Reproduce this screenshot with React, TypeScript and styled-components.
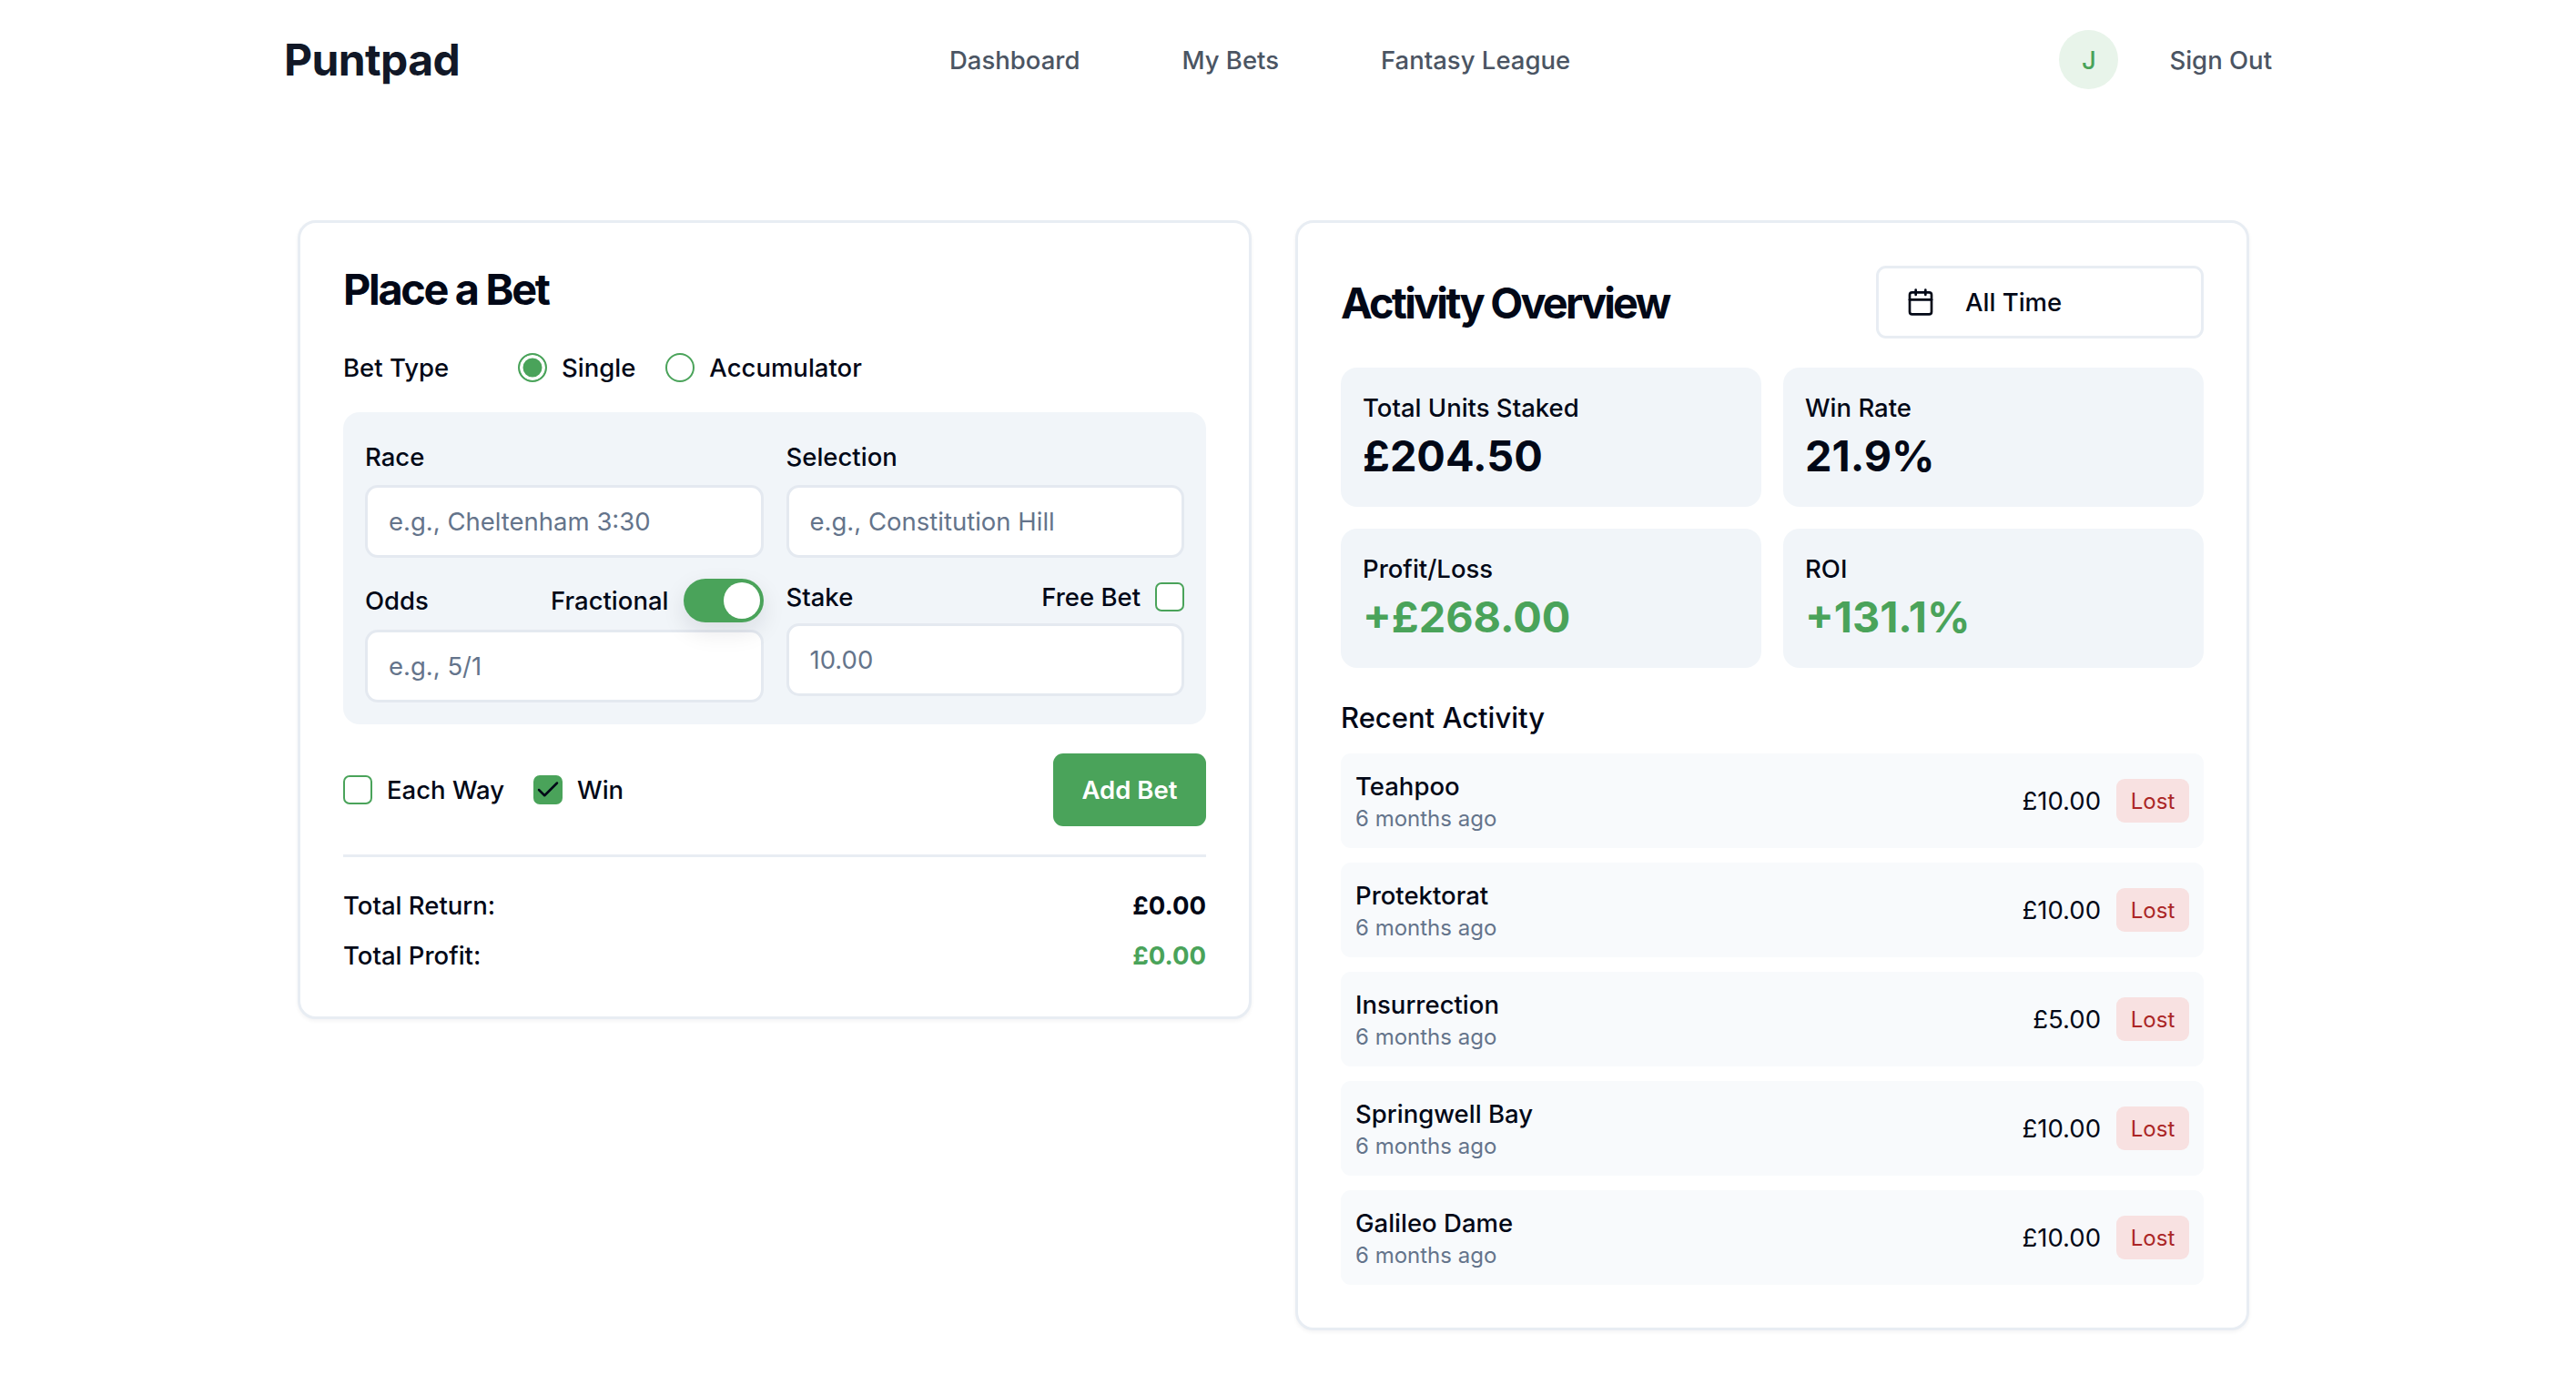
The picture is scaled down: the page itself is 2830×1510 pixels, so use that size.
import React from 'react';
import styled, { createGlobalStyle } from 'styled-components';
import { Calendar, Check } from 'lucide-react';

const GREEN = '#4aa35a';
const INK = '#020817';

const GlobalStyle = createGlobalStyle`
  * { box-sizing: border-box; }
  html, body { margin: 0; padding: 0; background: #fff; }
  body {
    font-family: Inter, "Liberation Sans", sans-serif;
    color: ${INK};
    font-size: 27.5px;
  }
`;

const Page = styled.div`
  width: 2830px;
  height: 1510px;
  overflow: hidden;
`;

const Header = styled.header`
  display: grid;
  grid-template-columns: 731px 1fr auto;
  align-items: center;
  height: 131px;
  padding: 0 334px 0 312px;
`;

const Logo = styled.div`
  font-size: 48px;
  font-weight: 700;
  letter-spacing: -0.6px;
  color: #111827;
`;

const Nav = styled.nav`
  display: flex;
  gap: 112px;
`;

const NavLink = styled.a`
  font-weight: 500;
  color: #4b5563;
`;

const UserArea = styled.div`
  display: flex;
  align-items: center;
  gap: 56px;
`;

const Avatar = styled.div`
  width: 65px;
  height: 65px;
  border-radius: 50%;
  background: #e8f4ea;
  color: ${GREEN};
  display: flex;
  align-items: center;
  justify-content: center;
  font-weight: 500;
`;

const Main = styled.main`
  display: grid;
  grid-template-columns: 1048px 1048px;
  gap: 48px;
  align-items: start;
  padding: 111px 0 0 327px;
`;

const Card = styled.section`
  background: #fff;
  border: 3px solid #e8edf3;
  border-radius: 20px;
  padding: 47px;
  box-shadow: 0 2px 4px rgba(15, 23, 42, 0.05);
`;

const Title = styled.h2<{ $tight?: boolean }>`
  margin: 0;
  font-size: 46.8px;
  line-height: 52px;
  font-weight: 700;
  letter-spacing: ${(p) => (p.$tight ? '-2.8px' : '-2.3px')};
  color: ${INK};
`;

const BetTypeRow = styled.div`
  display: flex;
  align-items: center;
  margin-top: 31px;
  height: 58px;
  font-weight: 500;
`;

const BetTypeLabel = styled.span`
  width: 192px;
`;

const RadioOption = styled.label`
  display: flex;
  align-items: center;
  gap: 16px;
  margin-right: 33px;
`;

const Radio = styled.span<{ $on?: boolean }>`
  width: 32px;
  height: 32px;
  border-radius: 50%;
  border: 2.5px solid ${GREEN};
  background: ${(p) => (p.$on ? GREEN : '#fff')};
  box-shadow: ${(p) => (p.$on ? 'inset 0 0 0 3.5px #fff' : 'none')};
`;

const Panel = styled.div`
  display: grid;
  grid-template-columns: 437.5px 437.5px;
  column-gap: 25px;
  background: #f1f5f9;
  border-radius: 18px;
  padding: 24px;
  margin-top: 20px;
  height: 343px;
`;

const Field = styled.div`
  display: flex;
  flex-direction: column;
`;

const FieldHead = styled.div<{ $h: number; $pad: string }>`
  display: flex;
  align-items: center;
  justify-content: space-between;
  height: ${(p) => p.$h}px;
  padding: ${(p) => p.$pad};
  font-weight: 500;
`;

const HeadRight = styled.div`
  display: flex;
  align-items: center;
  gap: 16px;
`;

const Input = styled.input`
  width: 100%;
  height: 80px;
  border: 3px solid #e4e9f0;
  border-radius: 14px;
  background: #fff;
  padding: 0 23px;
  font-family: inherit;
  font-size: 27.5px;
  color: ${INK};
  outline: none;
  &::placeholder { color: #64748b; opacity: 1; }
`;

const Toggle = styled.span`
  position: relative;
  width: 88px;
  height: 48px;
  border-radius: 24px;
  background: ${GREEN};
  box-shadow: 0 10px 26px rgba(15, 23, 42, 0.1);
`;

const Thumb = styled.span`
  position: absolute;
  top: 4px;
  right: 4px;
  width: 40px;
  height: 40px;
  border-radius: 50%;
  background: #fff;
`;

const Box = styled.span<{ $on?: boolean }>`
  width: 32px;
  height: 32px;
  flex: none;
  border-radius: 7px;
  border: 2.5px solid ${GREEN};
  background: ${(p) => (p.$on ? GREEN : '#fff')};
  display: flex;
  align-items: center;
  justify-content: center;
  color: ${INK};
  svg { flex: none; }
`;

const ActionRow = styled.div`
  display: flex;
  align-items: center;
  margin-top: 32px;
`;

const CheckOption = styled.label`
  display: flex;
  align-items: center;
  gap: 16px;
  margin-right: 32px;
  font-weight: 500;
`;

const AddButton = styled.button`
  margin-left: auto;
  width: 168px;
  height: 80px;
  border: 0;
  border-radius: 11px;
  background: ${GREEN};
  color: #fff;
  font-family: inherit;
  font-size: 27.5px;
  font-weight: 600;
`;

const Totals = styled.div`
  margin-top: 31px;
  padding-top: 33px;
  border-top: 3px solid #e8edf3;
  display: flex;
  flex-direction: column;
  gap: 15px;
`;

const TotalRow = styled.div`
  display: flex;
  justify-content: space-between;
  align-items: center;
  height: 40px;
  font-weight: 500;
`;

const TotalValue = styled.span<{ $green?: boolean }>`
  font-weight: 700;
  color: ${(p) => (p.$green ? GREEN : INK)};
`;

const OverviewHead = styled.div`
  display: flex;
  align-items: center;
  justify-content: space-between;
  height: 80px;
  margin-bottom: 32px;
  h2 { padding-top: 2px; }
`;

const RangeSelect = styled.div`
  width: 360px;
  height: 80px;
  border: 3px solid #e8edf3;
  border-radius: 11px;
  display: flex;
  align-items: center;
  gap: 33px;
  padding: 0 30px;
  font-weight: 500;
`;

const StatGrid = styled.div`
  display: grid;
  grid-template-columns: 1fr 1fr;
  gap: 24px;
`;

const Stat = styled.div`
  background: #f1f5f9;
  border-radius: 18px;
  height: 153px;
  padding: 24px;
`;

const StatLabel = styled.div`
  font-weight: 500;
  line-height: 40px;
`;

const StatValue = styled.div<{ $green?: boolean }>`
  margin-top: 4px;
  font-size: 46.8px;
  line-height: 58px;
  font-weight: 700;
  color: ${(p) => (p.$green ? GREEN : INK)};
`;

const RecentTitle = styled.h3`
  margin: 33px 0 17px;
  font-size: 31px;
  line-height: 44px;
  font-weight: 500;
  color: ${INK};
`;

const ActivityList = styled.div`
  display: flex;
  flex-direction: column;
  gap: 16px;
`;

const ActivityRow = styled.div`
  display: flex;
  align-items: center;
  justify-content: space-between;
  height: 104px;
  padding: 0 16px;
  background: #f8fafc;
  border-radius: 11px;
`;

const RowName = styled.div`
  font-weight: 500;
  line-height: 40px;
`;

const RowTime = styled.div`
  font-size: 24px;
  line-height: 32px;
  color: #64748b;
`;

const RowRight = styled.div`
  display: flex;
  align-items: center;
  gap: 17px;
`;

const Amount = styled.span`
  font-weight: 400;
`;

const LostBadge = styled.span`
  height: 48px;
  width: 80px;
  display: flex;
  align-items: center;
  justify-content: center;
  border-radius: 9px;
  background: #f8e1e1;
  color: #ab2626;
  font-size: 24px;
  font-weight: 400;
`;

const activity = [
  { name: 'Teahpoo', stake: '£10.00' },
  { name: 'Protektorat', stake: '£10.00' },
  { name: 'Insurrection', stake: '£5.00' },
  { name: 'Springwell Bay', stake: '£10.00' },
  { name: 'Galileo Dame', stake: '£10.00' },
];

const stats = [
  { label: 'Total Units Staked', value: '£204.50' },
  { label: 'Win Rate', value: '21.9%' },
  { label: 'Profit/Loss', value: '+£268.00', green: true },
  { label: 'ROI', value: '+131.1%', green: true },
];

const App = () => (
  <Page>
    <GlobalStyle />
    <Header>
      <Logo>Puntpad</Logo>
      <Nav>
        <NavLink>Dashboard</NavLink>
        <NavLink>My Bets</NavLink>
        <NavLink>Fantasy League</NavLink>
      </Nav>
      <UserArea>
        <Avatar>J</Avatar>
        <NavLink>Sign Out</NavLink>
      </UserArea>
    </Header>
    <Main>
      <Card>
        <Title>Place a Bet</Title>
        <BetTypeRow>
          <BetTypeLabel>Bet Type</BetTypeLabel>
          <RadioOption>
            <Radio $on />
            Single
          </RadioOption>
          <RadioOption>
            <Radio />
            Accumulator
          </RadioOption>
        </BetTypeRow>
        <Panel>
          <Field>
            <FieldHead $h={56} $pad="0 0 6px">Race</FieldHead>
            <Input placeholder="e.g., Cheltenham 3:30" />
          </Field>
          <Field>
            <FieldHead $h={56} $pad="0 0 6px">Selection</FieldHead>
            <Input placeholder="e.g., Constitution Hill" />
          </Field>
          <Field>
            <FieldHead $h={79} $pad="23px 0 8px">
              Odds
              <HeadRight>
                Fractional
                <Toggle>
                  <Thumb />
                </Toggle>
              </HeadRight>
            </FieldHead>
            <Input placeholder="e.g., 5/1" />
          </Field>
          <Field>
            <FieldHead $h={72} $pad="15px 0 2px">
              Stake
              <HeadRight>
                Free Bet
                <Box />
              </HeadRight>
            </FieldHead>
            <Input placeholder="10.00" />
          </Field>
        </Panel>
        <ActionRow>
          <CheckOption>
            <Box />
            Each Way
          </CheckOption>
          <CheckOption>
            <Box $on>
              <Check size={30} strokeWidth={2} />
            </Box>
            Win
          </CheckOption>
          <AddButton>Add Bet</AddButton>
        </ActionRow>
        <Totals>
          <TotalRow>
            Total Return:
            <TotalValue>£0.00</TotalValue>
          </TotalRow>
          <TotalRow>
            Total Profit:
            <TotalValue $green>£0.00</TotalValue>
          </TotalRow>
        </Totals>
      </Card>
      <Card>
        <OverviewHead>
          <Title $tight>Activity Overview</Title>
          <RangeSelect>
            <Calendar size={32} strokeWidth={2} />
            All Time
          </RangeSelect>
        </OverviewHead>
        <StatGrid>
          {stats.map((s) => (
            <Stat key={s.label}>
              <StatLabel>{s.label}</StatLabel>
              <StatValue $green={s.green}>{s.value}</StatValue>
            </Stat>
          ))}
        </StatGrid>
        <RecentTitle>Recent Activity</RecentTitle>
        <ActivityList>
          {activity.map((a) => (
            <ActivityRow key={a.name}>
              <div>
                <RowName>{a.name}</RowName>
                <RowTime>6 months ago</RowTime>
              </div>
              <RowRight>
                <Amount>{a.stake}</Amount>
                <LostBadge>Lost</LostBadge>
              </RowRight>
            </ActivityRow>
          ))}
        </ActivityList>
      </Card>
    </Main>
  </Page>
);

export default App;
